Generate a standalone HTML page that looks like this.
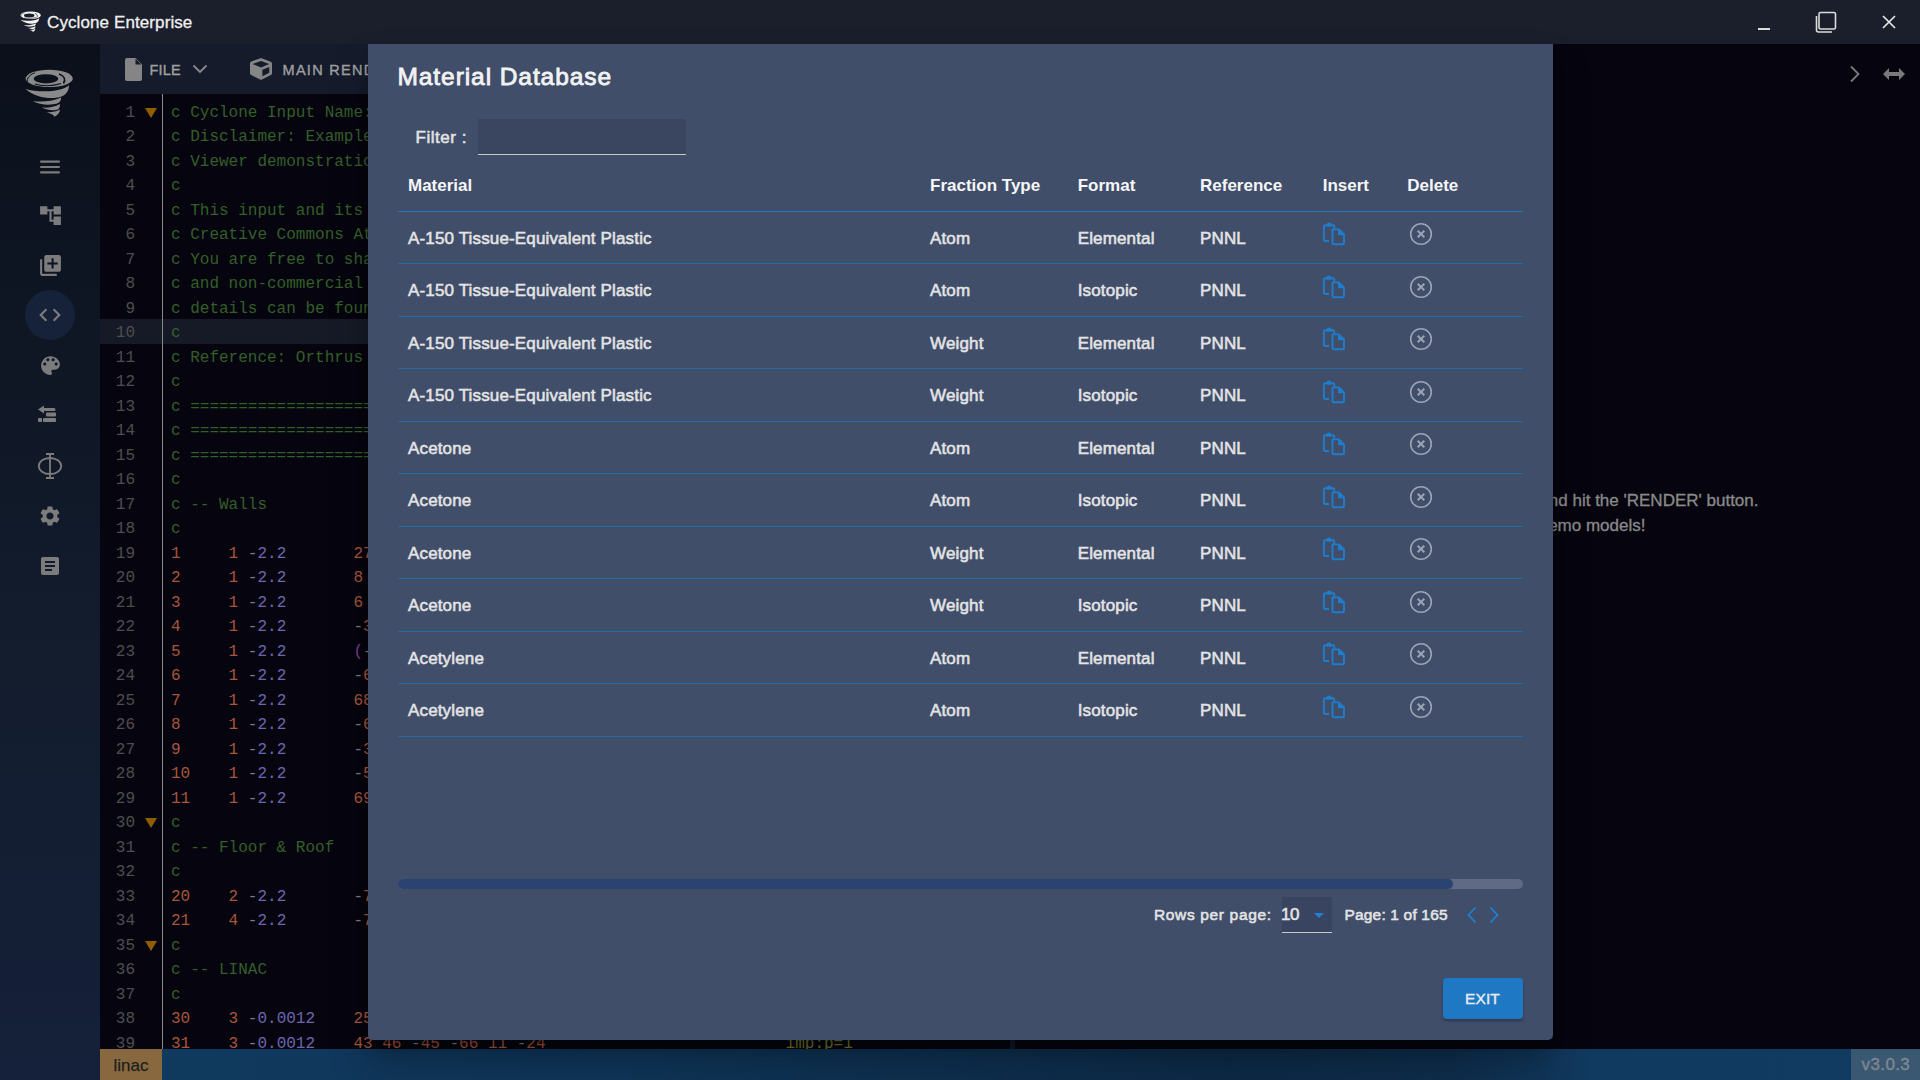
<!DOCTYPE html>
<html><head><meta charset="utf-8">
<style>
*{margin:0;padding:0;box-sizing:border-box}
html,body{width:1920px;height:1080px;overflow:hidden;background:#06050f;font-family:"Liberation Sans",sans-serif}
.a{position:absolute}
svg{display:block}
#title{left:0;top:0;width:1920px;height:44px;background:#1b1f2b}
#side{left:0;top:44px;width:100px;height:1036px;background:linear-gradient(#0b101b,#131d2e 60%,#15203a)}
#tool{left:100px;top:44px;width:910px;height:50px;background:#151b2b}
#editor{left:100px;top:94px;width:910px;height:955px;background:#06050f;overflow:hidden}
#divider{left:1010px;top:94px;width:5px;height:955px;background:#111827}
#right{left:1015px;top:44px;width:905px;height:1005px;background:#06050f}
#status{left:100px;top:1049px;width:1820px;height:31px;background:linear-gradient(90deg,#103a5f 0%,#0f3558 30%,#0d2a47 62%,#0e2d4b 74%,#113a60 82%,#113b61 100%)}
#modal{left:368px;top:44px;width:1185px;height:996px;background:#404e6a;border-radius:0 0 5px 5px;overflow:hidden;box-shadow:0 11px 15px -7px rgba(0,0,0,.35),0 24px 38px 3px rgba(0,0,0,.2)}
.ln{position:absolute;left:0;width:35px;text-align:right;font:16px/24.5px "Liberation Mono",monospace;color:#4e4e4e;white-space:pre}
.cl{position:absolute;left:71px;font:16px/24.5px "Liberation Mono",monospace;white-space:pre;color:#335f28}
.g{color:#335f28}.n{color:#a8553a}.m{color:#7c7a8a}.p{color:#6d65af}.par{color:#853a9c}.kw{color:#6f7a2a}
.fold{position:absolute;left:44.5px;width:0;height:0;border-left:6px solid transparent;border-right:6px solid transparent;border-top:10px solid #8f5e04}
.sico{position:absolute;left:0;width:100px;display:flex;justify-content:center}
.mt{position:absolute;white-space:nowrap;color:#e2e2e2;font-weight:bold;font-size:16px;line-height:16px}
.rt{position:absolute;white-space:nowrap;color:#e4e4e4;font-size:17px;line-height:16px;letter-spacing:0.15px;-webkit-text-stroke:0.55px #e4e4e4}
.hd{position:absolute;white-space:nowrap;color:#f6f6f6;font-weight:bold;font-size:17px;line-height:16px}
.rl{position:absolute;left:30px;width:1125px;height:1.2px;background:#2469a8}
</style></head><body>

<div id="title" class="a">
<div class="a" style="left:18px;top:9px;width:26px;height:26px"><svg width="26" height="26" viewBox="0 0 60 60"><g fill="#f2f2f2">
<path fill-rule="evenodd" d="M5.6,14.5 A23.6,8.7 0 1 1 52.8,14.5 A23.6,8.7 0 1 1 5.6,14.5 Z M13.8,14.8 A12.2,4.6 0 1 0 38.2,14.8 A12.2,4.6 0 1 0 13.8,14.8 Z"/>
<path d="M5.5,25 C14,27.5 30,28.5 40,25.5 C45,24 48,22.5 49,21 C49,27 46,31 40,33 C31,35.5 16,34 5.5,25 Z"/>
<path d="M12.8,37 C20,38 31,38 41,33.5 C41.5,36 40,38.5 37,39.5 C30,41.5 20,41 12.8,37 Z"/>
<path d="M22,43.5 C27,44 34,43.5 40,40 C40,42.5 39.5,44.5 38,45.5 C33,47 27,46 22,43.5 Z"/>
<path d="M26,48 C30,48.5 36,48 40,45.5 C40,48 38,51 34.4,52.8 C34,51 31,49.5 26,48 Z"/>
</g><g fill="none" stroke="#1b1f2b"><path d="M6,19.5 C12,23.5 22,25 33,24" stroke-width="2.2"/><path d="M39,10 C44.5,12 46,15.5 43.5,19.5" stroke-width="1.6"/><path d="M36,19.5 C40,17.5 40,13 36.5,11" stroke-width="1.3" stroke="#f2f2f2"/><path d="M8.5,20.5 C5.5,16.5 8,11 15,8.8" stroke-width="1"/><path d="M15,20 C21,22.2 32,22.5 41,19.5" stroke-width="1.1"/></g></svg></div>
<div class="a" style="left:47px;top:13.8px;color:#f0f0f0;font-size:17px;line-height:17px;letter-spacing:0.1px;-webkit-text-stroke:0.3px #f0f0f0;white-space:nowrap">Cyclone Enterprise</div>
<div class="a" style="left:1758px;top:28px;width:12px;height:2px;background:#dcdcdc"></div>
<svg class="a" style="left:1814px;top:10px" width="24" height="24" viewBox="0 0 24 24" fill="none" stroke="#dcdcdc" stroke-width="1.6"><rect x="5" y="2.5" width="16.5" height="16.5" rx="1.5"/><path d="M2.5,6 V20 Q2.5,22 4.5,22 H18"/></svg>
<svg class="a" style="left:1880px;top:14px" width="18" height="16" viewBox="0 0 18 16" stroke="#e6e6e6" stroke-width="1.7"><path d="M3,2 L15,14 M15,2 L3,14"/></svg>
</div>
<div id="side" class="a">
<div class="a" style="left:20px;top:20px;width:60px;height:60px"><svg width="60" height="60" viewBox="0 0 60 60"><g fill="#8a8a8a">
<path fill-rule="evenodd" d="M5.6,14.5 A23.6,8.7 0 1 1 52.8,14.5 A23.6,8.7 0 1 1 5.6,14.5 Z M13.8,14.8 A12.2,4.6 0 1 0 38.2,14.8 A12.2,4.6 0 1 0 13.8,14.8 Z"/>
<path d="M5.5,25 C14,27.5 30,28.5 40,25.5 C45,24 48,22.5 49,21 C49,27 46,31 40,33 C31,35.5 16,34 5.5,25 Z"/>
<path d="M12.8,37 C20,38 31,38 41,33.5 C41.5,36 40,38.5 37,39.5 C30,41.5 20,41 12.8,37 Z"/>
<path d="M22,43.5 C27,44 34,43.5 40,40 C40,42.5 39.5,44.5 38,45.5 C33,47 27,46 22,43.5 Z"/>
<path d="M26,48 C30,48.5 36,48 40,45.5 C40,48 38,51 34.4,52.8 C34,51 31,49.5 26,48 Z"/>
</g><g fill="none" stroke="#0c111c"><path d="M6,19.5 C12,23.5 22,25 33,24" stroke-width="2.2"/><path d="M39,10 C44.5,12 46,15.5 43.5,19.5" stroke-width="1.6"/><path d="M36,19.5 C40,17.5 40,13 36.5,11" stroke-width="1.3" stroke="#8a8a8a"/><path d="M8.5,20.5 C5.5,16.5 8,11 15,8.8" stroke-width="1"/><path d="M15,20 C21,22.2 32,22.5 41,19.5" stroke-width="1.1"/></g></svg></div>
<svg class="a" style="left:37.0px;top:110.0px" width="26" height="26" viewBox="0 0 24 24"><path fill="#7c7c7c" d="M3 18h18v-2H3v2zm0-5h18v-2H3v2zm0-7v2h18V6H3z"/></svg>
<svg class="a" style="left:37.5px;top:159.0px" width="25" height="25" viewBox="0 0 24 24"><path fill="#7c7c7c" d="M22 11V3h-7v3H9V3H2v8h7V8h2v10h4v3h7v-8h-7v3h-2V8h2v3z"/></svg>
<svg class="a" style="left:37.5px;top:209.0px" width="25" height="25" viewBox="0 0 24 24"><path fill="#7c7c7c" d="M4 6H2v14c0 1.1.9 2 2 2h14v-2H4V6zm16-4H8c-1.1 0-2 .9-2 2v12c0 1.1.9 2 2 2h12c1.1 0 2-.9 2-2V4c0-1.1-.9-2-2-2zm-1 9h-4v4h-2v-4H9V9h4V5h2v4h4v2z"/></svg>
<div class="a" style="left:25px;top:246px;width:50px;height:50px;border-radius:25px;background:#16223a"></div>
<svg class="a" style="left:37.0px;top:258.0px" width="26" height="26" viewBox="0 0 24 24"><path fill="#7c7c7c" d="M9.4 16.6L4.8 12l4.6-4.6L8 6l-6 6 6 6 1.4-1.4zm5.2 0l4.6-4.6-4.6-4.6L16 6l6 6-6 6-1.4-1.4z"/></svg>
<svg class="a" style="left:37.5px;top:308.5px" width="25" height="25" viewBox="0 0 24 24"><path fill="#7c7c7c" d="M12 3c-4.97 0-9 4.03-9 9s4.03 9 9 9c.83 0 1.5-.67 1.5-1.5 0-.39-.15-.74-.39-1.01-.23-.26-.38-.61-.38-.99 0-.83.67-1.5 1.5-1.5H16c2.76 0 5-2.24 5-5 0-4.42-4.03-8-9-8zm-5.5 9c-.83 0-1.5-.67-1.5-1.5S5.67 9 6.5 9 8 9.67 8 10.5 7.33 12 6.5 12zm3-4C8.67 8 8 7.33 8 6.5S8.67 5 9.5 5s1.5.67 1.5 1.5S10.33 8 9.5 8zm5 0c-.83 0-1.5-.67-1.5-1.5S13.67 5 14.5 5s1.5.67 1.5 1.5S15.33 8 14.5 8zm3 4c-.83 0-1.5-.67-1.5-1.5S16.67 9 17.5 9s1.5.67 1.5 1.5-.67 1.5-1.5 1.5z"/></svg>
<svg class="a" style="left:37px;top:361px" width="20" height="20" viewBox="0 0 20 20" fill="#7c7c7c"><path d="M1,4.5 L7,0.5 V3 H17 Q18.5,3 18.5,4.5 Q18.5,6 17,6 H7 V8.5 Z"/><rect x="9" y="7.5" width="10" height="4" rx="1"/><rect x="1" y="13" width="4" height="4" rx="1"/><rect x="6" y="13" width="13" height="4" rx="1"/></svg>
<svg class="a" style="left:37px;top:408.5px" width="26" height="26" viewBox="0 0 26 26" fill="none" stroke="#7c7c7c" stroke-width="1.8"><ellipse cx="13" cy="13" rx="11.2" ry="8"/><path d="M13,1 V25 M9,1 H17 M9,25 H17"/></svg>
<svg class="a" style="left:38.0px;top:459.5px" width="24" height="24" viewBox="0 0 24 24"><path fill="#7c7c7c" d="M19.14 12.94c.04-.3.06-.61.06-.94 0-.32-.02-.64-.07-.94l2.03-1.58c.18-.14.23-.41.12-.61l-1.92-3.32c-.12-.22-.37-.29-.59-.22l-2.39.96c-.5-.38-1.03-.7-1.62-.94l-.36-2.54c-.04-.24-.24-.41-.48-.41h-3.84c-.24 0-.43.17-.47.41l-.36 2.54c-.59.24-1.13.57-1.62.94l-2.39-.96c-.22-.08-.47 0-.59.22L2.74 8.87c-.12.21-.08.47.12.61l2.030 1.58c-.05.3-.09.63-.09.94s.02.64.07.94l-2.03 1.58c-.18.14-.23.41-.12.61l1.92 3.32c.12.22.37.29.59.22l2.39-.96c.5.38 1.03.7 1.62.94l.36 2.54c.05.24.24.41.48.41h3.84c.24 0 .44-.17.47-.41l.36-2.54c.59-.24 1.13-.56 1.62-.94l2.39.96c.22.08.47 0 .59-.22l1.92-3.32c.12-.22.07-.47-.12-.61l-2.01-1.58zM12 15.6c-1.98 0-3.6-1.62-3.6-3.6s1.62-3.6 3.6-3.6 3.6 1.62 3.6 3.6-1.62 3.6-3.6 3.6z"/></svg>
<svg class="a" style="left:38.0px;top:509.5px" width="24" height="24" viewBox="0 0 24 24"><path fill="#7c7c7c" d="M19 3H5c-1.1 0-2 .9-2 2v14c0 1.1.9 2 2 2h14c1.1 0 2-.9 2-2V5c0-1.1-.9-2-2-2zm-5 14H7v-2h7v2zm3-4H7v-2h10v2zm0-4H7V7h10v2z"/></svg>
</div>
<div id="tool" class="a">
<svg class="a" style="left:24.5px;top:13.5px" width="17" height="23" viewBox="0 0 17 23"><path fill="#858585" d="M2,0 H10.5 L17,6.5 V21 Q17,23 15,23 H2 Q0,23 0,21 V2 Q0,0 2,0 Z M10.5,0.8 V6.5 H16.2 Z"/></svg>
<div class="a" style="left:49.5px;top:19.3px;color:#a0a0a0;font-size:14.5px;line-height:14px;letter-spacing:0.2px;-webkit-text-stroke:0.35px #a0a0a0">FILE</div>
<svg class="a" style="left:92px;top:20px" width="16" height="10" viewBox="0 0 16 10" fill="none" stroke="#8a8a8a" stroke-width="1.8"><path d="M1.5,1.5 L8,8 L14.5,1.5"/></svg>
<svg class="a" style="left:150px;top:14px" width="22" height="22" viewBox="0 0 512 512"><path fill="#858585" d="M239.1 6.3l-208 78c-18.7 7-31.1 25-31.1 45v225.1c0 18.2 10.3 34.8 26.5 42.9l208 104c13.5 6.8 29.4 6.8 42.9 0l208-104c16.3-8.1 26.5-24.8 26.5-42.9V129.3c0-20-12.4-37.9-31.1-44.9l-208-78C262 2.2 250 2.2 239.1 6.3zM256 68.4l192 72v1.1l-192 78-192-78v-1.1l192-72zm32 356V275.5l160-65v133.9l-160 80z"/></svg>
<div class="a" style="left:182.5px;top:19.3px;color:#a0a0a0;font-size:14.5px;line-height:14px;letter-spacing:1.3px;-webkit-text-stroke:0.35px #a0a0a0;white-space:nowrap">MAIN RENDER</div>
</div>
<div id="editor" class="a">
<div class="a" style="left:0;top:225px;width:910px;height:25px;background:#161a26"></div>
<div class="a" style="left:62px;top:0;width:1.4px;height:955px;background:#8a8a8a"></div>
<div class="ln" style="top:6.75px">1</div>
<div class="cl" style="top:6.75px"><span class="g">c Cyclone Input Name:</span></div>
<div class="ln" style="top:31.25px">2</div>
<div class="cl" style="top:31.25px"><span class="g">c Disclaimer: Example</span></div>
<div class="ln" style="top:55.75px">3</div>
<div class="cl" style="top:55.75px"><span class="g">c Viewer demonstration</span></div>
<div class="ln" style="top:80.25px">4</div>
<div class="cl" style="top:80.25px"><span class="g">c</span></div>
<div class="ln" style="top:104.75px">5</div>
<div class="cl" style="top:104.75px"><span class="g">c This input and its</span></div>
<div class="ln" style="top:129.25px">6</div>
<div class="cl" style="top:129.25px"><span class="g">c Creative Commons Att</span></div>
<div class="ln" style="top:153.75px">7</div>
<div class="cl" style="top:153.75px"><span class="g">c You are free to shar</span></div>
<div class="ln" style="top:178.25px">8</div>
<div class="cl" style="top:178.25px"><span class="g">c and non-commercial</span></div>
<div class="ln" style="top:202.75px">9</div>
<div class="cl" style="top:202.75px"><span class="g">c details can be found</span></div>
<div class="ln" style="top:227.25px">10</div>
<div class="cl" style="top:227.25px"><span class="g">c</span></div>
<div class="ln" style="top:251.75px">11</div>
<div class="cl" style="top:251.75px"><span class="g">c Reference: Orthrus</span></div>
<div class="ln" style="top:276.25px">12</div>
<div class="cl" style="top:276.25px"><span class="g">c</span></div>
<div class="ln" style="top:300.75px">13</div>
<div class="cl" style="top:300.75px"><span class="g">c ====================</span></div>
<div class="ln" style="top:325.25px">14</div>
<div class="cl" style="top:325.25px"><span class="g">c ====================</span></div>
<div class="ln" style="top:349.75px">15</div>
<div class="cl" style="top:349.75px"><span class="g">c ====================</span></div>
<div class="ln" style="top:374.25px">16</div>
<div class="cl" style="top:374.25px"><span class="g">c</span></div>
<div class="ln" style="top:398.75px">17</div>
<div class="cl" style="top:398.75px"><span class="g">c -- Walls</span></div>
<div class="ln" style="top:423.25px">18</div>
<div class="cl" style="top:423.25px"><span class="g">c</span></div>
<div class="ln" style="top:447.75px">19</div>
<div class="cl" style="top:447.75px"><span class="n">1     </span><span class="n">1</span><span class="x"> </span><span class="m">-</span><span class="p">2.2</span><span class="x">       </span><span class="n">27</span></div>
<div class="ln" style="top:472.25px">20</div>
<div class="cl" style="top:472.25px"><span class="n">2     </span><span class="n">1</span><span class="x"> </span><span class="m">-</span><span class="p">2.2</span><span class="x">       </span><span class="n">8 </span></div>
<div class="ln" style="top:496.75px">21</div>
<div class="cl" style="top:496.75px"><span class="n">3     </span><span class="n">1</span><span class="x"> </span><span class="m">-</span><span class="p">2.2</span><span class="x">       </span><span class="n">6 </span></div>
<div class="ln" style="top:521.25px">22</div>
<div class="cl" style="top:521.25px"><span class="n">4     </span><span class="n">1</span><span class="x"> </span><span class="m">-</span><span class="p">2.2</span><span class="x">       </span><span class="m">-</span><span class="n">3</span></div>
<div class="ln" style="top:545.75px">23</div>
<div class="cl" style="top:545.75px"><span class="n">5     </span><span class="n">1</span><span class="x"> </span><span class="m">-</span><span class="p">2.2</span><span class="x">       </span><span class="par">(</span><span class="m">-</span></div>
<div class="ln" style="top:570.25px">24</div>
<div class="cl" style="top:570.25px"><span class="n">6     </span><span class="n">1</span><span class="x"> </span><span class="m">-</span><span class="p">2.2</span><span class="x">       </span><span class="m">-</span><span class="n">6</span></div>
<div class="ln" style="top:594.75px">25</div>
<div class="cl" style="top:594.75px"><span class="n">7     </span><span class="n">1</span><span class="x"> </span><span class="m">-</span><span class="p">2.2</span><span class="x">       </span><span class="n">68</span></div>
<div class="ln" style="top:619.25px">26</div>
<div class="cl" style="top:619.25px"><span class="n">8     </span><span class="n">1</span><span class="x"> </span><span class="m">-</span><span class="p">2.2</span><span class="x">       </span><span class="m">-</span><span class="n">6</span></div>
<div class="ln" style="top:643.75px">27</div>
<div class="cl" style="top:643.75px"><span class="n">9     </span><span class="n">1</span><span class="x"> </span><span class="m">-</span><span class="p">2.2</span><span class="x">       </span><span class="m">-</span><span class="n">3</span></div>
<div class="ln" style="top:668.25px">28</div>
<div class="cl" style="top:668.25px"><span class="n">10    </span><span class="n">1</span><span class="x"> </span><span class="m">-</span><span class="p">2.2</span><span class="x">       </span><span class="m">-</span><span class="n">5</span></div>
<div class="ln" style="top:692.75px">29</div>
<div class="cl" style="top:692.75px"><span class="n">11    </span><span class="n">1</span><span class="x"> </span><span class="m">-</span><span class="p">2.2</span><span class="x">       </span><span class="n">69</span></div>
<div class="ln" style="top:717.25px">30</div>
<div class="cl" style="top:717.25px"><span class="g">c</span></div>
<div class="ln" style="top:741.75px">31</div>
<div class="cl" style="top:741.75px"><span class="g">c -- Floor &amp; Roof</span></div>
<div class="ln" style="top:766.25px">32</div>
<div class="cl" style="top:766.25px"><span class="g">c</span></div>
<div class="ln" style="top:790.75px">33</div>
<div class="cl" style="top:790.75px"><span class="n">20    </span><span class="n">2</span><span class="x"> </span><span class="m">-</span><span class="p">2.2</span><span class="x">       </span><span class="m">-</span><span class="n">7</span></div>
<div class="ln" style="top:815.25px">34</div>
<div class="cl" style="top:815.25px"><span class="n">21    </span><span class="n">4</span><span class="x"> </span><span class="m">-</span><span class="p">2.2</span><span class="x">       </span><span class="m">-</span><span class="n">7</span></div>
<div class="ln" style="top:839.75px">35</div>
<div class="cl" style="top:839.75px"><span class="g">c</span></div>
<div class="ln" style="top:864.25px">36</div>
<div class="cl" style="top:864.25px"><span class="g">c -- LINAC</span></div>
<div class="ln" style="top:888.75px">37</div>
<div class="cl" style="top:888.75px"><span class="g">c</span></div>
<div class="ln" style="top:913.25px">38</div>
<div class="cl" style="top:913.25px"><span class="n">30    </span><span class="n">3</span><span class="x"> </span><span class="m">-</span><span class="p">0.0012</span><span class="x">    </span><span class="n">25</span></div>
<div class="ln" style="top:937.75px">39</div>
<div class="cl" style="top:937.75px"><span class="n">31    </span><span class="n">3</span><span class="x"> </span><span class="m">-</span><span class="p">0.0012</span><span class="x">    </span><span class="n">43</span><span class="x"> </span><span class="n">46</span><span class="x"> </span><span class="m">-</span><span class="n">45</span><span class="x"> </span><span class="m">-</span><span class="n">66</span><span class="x"> </span><span class="n">11</span><span class="x"> </span><span class="m">-</span><span class="n">24</span><span class="x">                         </span><span class="kw">imp:p=1</span></div>
<div class="fold" style="top:13.95px"></div>
<div class="fold" style="top:724.45px"></div>
<div class="fold" style="top:846.95px"></div>
</div>
<div id="divider" class="a"></div>
<div id="right" class="a">
<svg class="a" style="left:834px;top:21px" width="12" height="18" viewBox="0 0 12 18" fill="none" stroke="#7a7a7a" stroke-width="1.8"><path d="M2,1.5 L9.5,9 L2,16.5"/></svg>
<svg class="a" style="left:868px;top:23px" width="22" height="14" viewBox="0 0 22 14" fill="#7a7a7a"><path d="M0,7 L6,1 V5 H16 V1 L22,7 L16,13 V9 H6 V13 Z"/></svg>
<div class="a" style="right:161.5px;top:447.6px;color:#8a8a8a;font-size:17px;line-height:17px;white-space:nowrap;-webkit-text-stroke:0.3px #8a8a8a">Edit the input and hit the 'RENDER' button.</div>
<div class="a" style="right:274.5px;top:473.35px;color:#8a8a8a;font-size:17px;line-height:17px;white-space:nowrap;-webkit-text-stroke:0.3px #8a8a8a">Or try one of the demo models!</div>
</div>
<div id="status" class="a">
<div class="a" style="left:0;top:0;width:62px;height:31px;background:#88693f"></div>
<div class="a" style="left:13.5px;top:7.85px;color:#1e1e1e;font-size:17px;line-height:17px;-webkit-text-stroke:0.25px #1e1e1e">linac</div>
<div class="a" style="left:1751px;top:0;width:69px;height:31px;background:#3a5872"></div>
<div class="a" style="left:1761.5px;top:6.6px;color:#7d8791;font-size:17px;line-height:17px;letter-spacing:0.4px;-webkit-text-stroke:0.4px #7d8791">v3.0.3</div>
</div>
<div id="modal" class="a">
<div class="a" style="left:29.5px;top:19.6px;font-size:24.5px;line-height:25px;letter-spacing:0.92px;color:#f2f2f2;-webkit-text-stroke:0.85px #f2f2f2;white-space:nowrap">Material Database</div>
<div class="rt" style="left:47.5px;top:86.3px;letter-spacing:0.55px">Filter :</div>
<div class="a" style="left:110px;top:75px;width:208px;height:36px;background:#3a4560;border-bottom:1px solid #c9c9c9"></div>
<div class="hd" style="left:40px;top:134.3px">Material</div>
<div class="hd" style="left:562px;top:134.3px">Fraction Type</div>
<div class="hd" style="left:709.7px;top:134.3px">Format</div>
<div class="hd" style="left:832px;top:134.3px">Reference</div>
<div class="hd" style="left:954.7px;top:134.3px">Insert</div>
<div class="hd" style="left:1039.3px;top:134.3px">Delete</div>
<div class="rl" style="top:166.8px;height:1.5px;background:#2a74b8"></div>
<div class="rt" style="left:40px;top:186.80px">A-150 Tissue-Equivalent Plastic</div>
<div class="rt" style="left:562px;top:186.80px">Atom</div>
<div class="rt" style="left:709.7px;top:186.80px">Elemental</div>
<div class="rt" style="left:832px;top:186.80px">PNNL</div>
<svg class="a" style="left:954px;top:178.0px" width="24" height="24" viewBox="0 0 24 24" fill="none" stroke="#1f7dcc" stroke-width="1.9" stroke-linejoin="round"><path d="M7,19 H3.2 Q1.9,19 1.9,17.7 V4.6 Q1.9,3.3 3.2,3.3 H5.5 M8.5,3.3 H11 Q12.3,3.3 12.3,4.6 V6.8"/><path d="M5.3,3.8 Q5.3,1.4 7,1.4 Q8.7,1.4 8.7,3.8 Z" fill="#1f7dcc"/><path d="M10.5,7.4 H17 L22,12.4 V21 Q22,22.3 20.7,22.3 H11.8 Q10.5,22.3 10.5,21 Z"/><path d="M17,7.4 V12.4 H22" fill="#1f7dcc"/></svg>
<svg class="a" style="left:1041px;top:178.0px" width="24" height="24" viewBox="0 0 24 24" fill="none" stroke="#9ba4b4" stroke-width="1.6"><circle cx="12" cy="12" r="10.3"/><path d="M8.7,8.7 L15.3,15.3 M15.3,8.7 L8.7,15.3" stroke-width="2"/></svg>
<div class="rl" style="top:219.00px"></div>
<div class="rt" style="left:40px;top:239.30px">A-150 Tissue-Equivalent Plastic</div>
<div class="rt" style="left:562px;top:239.30px">Atom</div>
<div class="rt" style="left:709.7px;top:239.30px">Isotopic</div>
<div class="rt" style="left:832px;top:239.30px">PNNL</div>
<svg class="a" style="left:954px;top:230.5px" width="24" height="24" viewBox="0 0 24 24" fill="none" stroke="#1f7dcc" stroke-width="1.9" stroke-linejoin="round"><path d="M7,19 H3.2 Q1.9,19 1.9,17.7 V4.6 Q1.9,3.3 3.2,3.3 H5.5 M8.5,3.3 H11 Q12.3,3.3 12.3,4.6 V6.8"/><path d="M5.3,3.8 Q5.3,1.4 7,1.4 Q8.7,1.4 8.7,3.8 Z" fill="#1f7dcc"/><path d="M10.5,7.4 H17 L22,12.4 V21 Q22,22.3 20.7,22.3 H11.8 Q10.5,22.3 10.5,21 Z"/><path d="M17,7.4 V12.4 H22" fill="#1f7dcc"/></svg>
<svg class="a" style="left:1041px;top:230.5px" width="24" height="24" viewBox="0 0 24 24" fill="none" stroke="#9ba4b4" stroke-width="1.6"><circle cx="12" cy="12" r="10.3"/><path d="M8.7,8.7 L15.3,15.3 M15.3,8.7 L8.7,15.3" stroke-width="2"/></svg>
<div class="rl" style="top:271.50px"></div>
<div class="rt" style="left:40px;top:291.80px">A-150 Tissue-Equivalent Plastic</div>
<div class="rt" style="left:562px;top:291.80px">Weight</div>
<div class="rt" style="left:709.7px;top:291.80px">Elemental</div>
<div class="rt" style="left:832px;top:291.80px">PNNL</div>
<svg class="a" style="left:954px;top:283.0px" width="24" height="24" viewBox="0 0 24 24" fill="none" stroke="#1f7dcc" stroke-width="1.9" stroke-linejoin="round"><path d="M7,19 H3.2 Q1.9,19 1.9,17.7 V4.6 Q1.9,3.3 3.2,3.3 H5.5 M8.5,3.3 H11 Q12.3,3.3 12.3,4.6 V6.8"/><path d="M5.3,3.8 Q5.3,1.4 7,1.4 Q8.7,1.4 8.7,3.8 Z" fill="#1f7dcc"/><path d="M10.5,7.4 H17 L22,12.4 V21 Q22,22.3 20.7,22.3 H11.8 Q10.5,22.3 10.5,21 Z"/><path d="M17,7.4 V12.4 H22" fill="#1f7dcc"/></svg>
<svg class="a" style="left:1041px;top:283.0px" width="24" height="24" viewBox="0 0 24 24" fill="none" stroke="#9ba4b4" stroke-width="1.6"><circle cx="12" cy="12" r="10.3"/><path d="M8.7,8.7 L15.3,15.3 M15.3,8.7 L8.7,15.3" stroke-width="2"/></svg>
<div class="rl" style="top:324.00px"></div>
<div class="rt" style="left:40px;top:344.30px">A-150 Tissue-Equivalent Plastic</div>
<div class="rt" style="left:562px;top:344.30px">Weight</div>
<div class="rt" style="left:709.7px;top:344.30px">Isotopic</div>
<div class="rt" style="left:832px;top:344.30px">PNNL</div>
<svg class="a" style="left:954px;top:335.5px" width="24" height="24" viewBox="0 0 24 24" fill="none" stroke="#1f7dcc" stroke-width="1.9" stroke-linejoin="round"><path d="M7,19 H3.2 Q1.9,19 1.9,17.7 V4.6 Q1.9,3.3 3.2,3.3 H5.5 M8.5,3.3 H11 Q12.3,3.3 12.3,4.6 V6.8"/><path d="M5.3,3.8 Q5.3,1.4 7,1.4 Q8.7,1.4 8.7,3.8 Z" fill="#1f7dcc"/><path d="M10.5,7.4 H17 L22,12.4 V21 Q22,22.3 20.7,22.3 H11.8 Q10.5,22.3 10.5,21 Z"/><path d="M17,7.4 V12.4 H22" fill="#1f7dcc"/></svg>
<svg class="a" style="left:1041px;top:335.5px" width="24" height="24" viewBox="0 0 24 24" fill="none" stroke="#9ba4b4" stroke-width="1.6"><circle cx="12" cy="12" r="10.3"/><path d="M8.7,8.7 L15.3,15.3 M15.3,8.7 L8.7,15.3" stroke-width="2"/></svg>
<div class="rl" style="top:376.50px"></div>
<div class="rt" style="left:40px;top:396.80px">Acetone</div>
<div class="rt" style="left:562px;top:396.80px">Atom</div>
<div class="rt" style="left:709.7px;top:396.80px">Elemental</div>
<div class="rt" style="left:832px;top:396.80px">PNNL</div>
<svg class="a" style="left:954px;top:388.0px" width="24" height="24" viewBox="0 0 24 24" fill="none" stroke="#1f7dcc" stroke-width="1.9" stroke-linejoin="round"><path d="M7,19 H3.2 Q1.9,19 1.9,17.7 V4.6 Q1.9,3.3 3.2,3.3 H5.5 M8.5,3.3 H11 Q12.3,3.3 12.3,4.6 V6.8"/><path d="M5.3,3.8 Q5.3,1.4 7,1.4 Q8.7,1.4 8.7,3.8 Z" fill="#1f7dcc"/><path d="M10.5,7.4 H17 L22,12.4 V21 Q22,22.3 20.7,22.3 H11.8 Q10.5,22.3 10.5,21 Z"/><path d="M17,7.4 V12.4 H22" fill="#1f7dcc"/></svg>
<svg class="a" style="left:1041px;top:388.0px" width="24" height="24" viewBox="0 0 24 24" fill="none" stroke="#9ba4b4" stroke-width="1.6"><circle cx="12" cy="12" r="10.3"/><path d="M8.7,8.7 L15.3,15.3 M15.3,8.7 L8.7,15.3" stroke-width="2"/></svg>
<div class="rl" style="top:429.00px"></div>
<div class="rt" style="left:40px;top:449.30px">Acetone</div>
<div class="rt" style="left:562px;top:449.30px">Atom</div>
<div class="rt" style="left:709.7px;top:449.30px">Isotopic</div>
<div class="rt" style="left:832px;top:449.30px">PNNL</div>
<svg class="a" style="left:954px;top:440.5px" width="24" height="24" viewBox="0 0 24 24" fill="none" stroke="#1f7dcc" stroke-width="1.9" stroke-linejoin="round"><path d="M7,19 H3.2 Q1.9,19 1.9,17.7 V4.6 Q1.9,3.3 3.2,3.3 H5.5 M8.5,3.3 H11 Q12.3,3.3 12.3,4.6 V6.8"/><path d="M5.3,3.8 Q5.3,1.4 7,1.4 Q8.7,1.4 8.7,3.8 Z" fill="#1f7dcc"/><path d="M10.5,7.4 H17 L22,12.4 V21 Q22,22.3 20.7,22.3 H11.8 Q10.5,22.3 10.5,21 Z"/><path d="M17,7.4 V12.4 H22" fill="#1f7dcc"/></svg>
<svg class="a" style="left:1041px;top:440.5px" width="24" height="24" viewBox="0 0 24 24" fill="none" stroke="#9ba4b4" stroke-width="1.6"><circle cx="12" cy="12" r="10.3"/><path d="M8.7,8.7 L15.3,15.3 M15.3,8.7 L8.7,15.3" stroke-width="2"/></svg>
<div class="rl" style="top:481.50px"></div>
<div class="rt" style="left:40px;top:501.80px">Acetone</div>
<div class="rt" style="left:562px;top:501.80px">Weight</div>
<div class="rt" style="left:709.7px;top:501.80px">Elemental</div>
<div class="rt" style="left:832px;top:501.80px">PNNL</div>
<svg class="a" style="left:954px;top:493.0px" width="24" height="24" viewBox="0 0 24 24" fill="none" stroke="#1f7dcc" stroke-width="1.9" stroke-linejoin="round"><path d="M7,19 H3.2 Q1.9,19 1.9,17.7 V4.6 Q1.9,3.3 3.2,3.3 H5.5 M8.5,3.3 H11 Q12.3,3.3 12.3,4.6 V6.8"/><path d="M5.3,3.8 Q5.3,1.4 7,1.4 Q8.7,1.4 8.7,3.8 Z" fill="#1f7dcc"/><path d="M10.5,7.4 H17 L22,12.4 V21 Q22,22.3 20.7,22.3 H11.8 Q10.5,22.3 10.5,21 Z"/><path d="M17,7.4 V12.4 H22" fill="#1f7dcc"/></svg>
<svg class="a" style="left:1041px;top:493.0px" width="24" height="24" viewBox="0 0 24 24" fill="none" stroke="#9ba4b4" stroke-width="1.6"><circle cx="12" cy="12" r="10.3"/><path d="M8.7,8.7 L15.3,15.3 M15.3,8.7 L8.7,15.3" stroke-width="2"/></svg>
<div class="rl" style="top:534.00px"></div>
<div class="rt" style="left:40px;top:554.30px">Acetone</div>
<div class="rt" style="left:562px;top:554.30px">Weight</div>
<div class="rt" style="left:709.7px;top:554.30px">Isotopic</div>
<div class="rt" style="left:832px;top:554.30px">PNNL</div>
<svg class="a" style="left:954px;top:545.5px" width="24" height="24" viewBox="0 0 24 24" fill="none" stroke="#1f7dcc" stroke-width="1.9" stroke-linejoin="round"><path d="M7,19 H3.2 Q1.9,19 1.9,17.7 V4.6 Q1.9,3.3 3.2,3.3 H5.5 M8.5,3.3 H11 Q12.3,3.3 12.3,4.6 V6.8"/><path d="M5.3,3.8 Q5.3,1.4 7,1.4 Q8.7,1.4 8.7,3.8 Z" fill="#1f7dcc"/><path d="M10.5,7.4 H17 L22,12.4 V21 Q22,22.3 20.7,22.3 H11.8 Q10.5,22.3 10.5,21 Z"/><path d="M17,7.4 V12.4 H22" fill="#1f7dcc"/></svg>
<svg class="a" style="left:1041px;top:545.5px" width="24" height="24" viewBox="0 0 24 24" fill="none" stroke="#9ba4b4" stroke-width="1.6"><circle cx="12" cy="12" r="10.3"/><path d="M8.7,8.7 L15.3,15.3 M15.3,8.7 L8.7,15.3" stroke-width="2"/></svg>
<div class="rl" style="top:586.50px"></div>
<div class="rt" style="left:40px;top:606.80px">Acetylene</div>
<div class="rt" style="left:562px;top:606.80px">Atom</div>
<div class="rt" style="left:709.7px;top:606.80px">Elemental</div>
<div class="rt" style="left:832px;top:606.80px">PNNL</div>
<svg class="a" style="left:954px;top:598.0px" width="24" height="24" viewBox="0 0 24 24" fill="none" stroke="#1f7dcc" stroke-width="1.9" stroke-linejoin="round"><path d="M7,19 H3.2 Q1.9,19 1.9,17.7 V4.6 Q1.9,3.3 3.2,3.3 H5.5 M8.5,3.3 H11 Q12.3,3.3 12.3,4.6 V6.8"/><path d="M5.3,3.8 Q5.3,1.4 7,1.4 Q8.7,1.4 8.7,3.8 Z" fill="#1f7dcc"/><path d="M10.5,7.4 H17 L22,12.4 V21 Q22,22.3 20.7,22.3 H11.8 Q10.5,22.3 10.5,21 Z"/><path d="M17,7.4 V12.4 H22" fill="#1f7dcc"/></svg>
<svg class="a" style="left:1041px;top:598.0px" width="24" height="24" viewBox="0 0 24 24" fill="none" stroke="#9ba4b4" stroke-width="1.6"><circle cx="12" cy="12" r="10.3"/><path d="M8.7,8.7 L15.3,15.3 M15.3,8.7 L8.7,15.3" stroke-width="2"/></svg>
<div class="rl" style="top:639.00px"></div>
<div class="rt" style="left:40px;top:659.30px">Acetylene</div>
<div class="rt" style="left:562px;top:659.30px">Atom</div>
<div class="rt" style="left:709.7px;top:659.30px">Isotopic</div>
<div class="rt" style="left:832px;top:659.30px">PNNL</div>
<svg class="a" style="left:954px;top:650.5px" width="24" height="24" viewBox="0 0 24 24" fill="none" stroke="#1f7dcc" stroke-width="1.9" stroke-linejoin="round"><path d="M7,19 H3.2 Q1.9,19 1.9,17.7 V4.6 Q1.9,3.3 3.2,3.3 H5.5 M8.5,3.3 H11 Q12.3,3.3 12.3,4.6 V6.8"/><path d="M5.3,3.8 Q5.3,1.4 7,1.4 Q8.7,1.4 8.7,3.8 Z" fill="#1f7dcc"/><path d="M10.5,7.4 H17 L22,12.4 V21 Q22,22.3 20.7,22.3 H11.8 Q10.5,22.3 10.5,21 Z"/><path d="M17,7.4 V12.4 H22" fill="#1f7dcc"/></svg>
<svg class="a" style="left:1041px;top:650.5px" width="24" height="24" viewBox="0 0 24 24" fill="none" stroke="#9ba4b4" stroke-width="1.6"><circle cx="12" cy="12" r="10.3"/><path d="M8.7,8.7 L15.3,15.3 M15.3,8.7 L8.7,15.3" stroke-width="2"/></svg>
<div class="rl" style="top:691.50px"></div>
<div class="a" style="left:30px;top:835px;width:1125px;height:10px;border-radius:5px;background:#5f6a84"></div>
<div class="a" style="left:30px;top:835px;width:1055px;height:10px;border-radius:5px;background:#2a4370"></div>
<div class="rt" style="left:786px;top:863.1px;font-size:15.5px;letter-spacing:0.65px">Rows per page:</div>
<div class="a" style="left:914px;top:853px;width:50px;height:36px;background:#394560;border-bottom:1px solid #c9c9c9"></div>
<div class="rt" style="left:913px;top:863.0px;font-size:17px;letter-spacing:-0.5px">10</div>
<div class="a" style="left:946px;top:868.5px;width:0;height:0;border-left:5px solid transparent;border-right:5px solid transparent;border-top:5px solid #1e80d2"></div>
<div class="rt" style="left:976.5px;top:863.1px;font-size:15.5px;letter-spacing:0.17px">Page: 1 of 165</div>
<svg class="a" style="left:1098px;top:862px" width="12" height="18" viewBox="0 0 12 18" fill="none" stroke="#1e80d2" stroke-width="1.8"><path d="M9.5,1.5 L2.5,9 L9.5,16.5"/></svg>
<svg class="a" style="left:1120px;top:862px" width="12" height="18" viewBox="0 0 12 18" fill="none" stroke="#1e80d2" stroke-width="1.8"><path d="M2.5,1.5 L9.5,9 L2.5,16.5"/></svg>
<div class="a" style="left:1075px;top:934px;width:80px;height:41px;border-radius:4px;background:#1f78c3;box-shadow:0 2px 3px rgba(0,0,0,0.3)"></div>
<div class="a" style="left:1097px;top:946.6px;font-size:15.5px;line-height:16px;letter-spacing:0.1px;color:#e6ecf2;-webkit-text-stroke:0.4px #e6ecf2;white-space:nowrap">EXIT</div>
</div>
</body></html>
